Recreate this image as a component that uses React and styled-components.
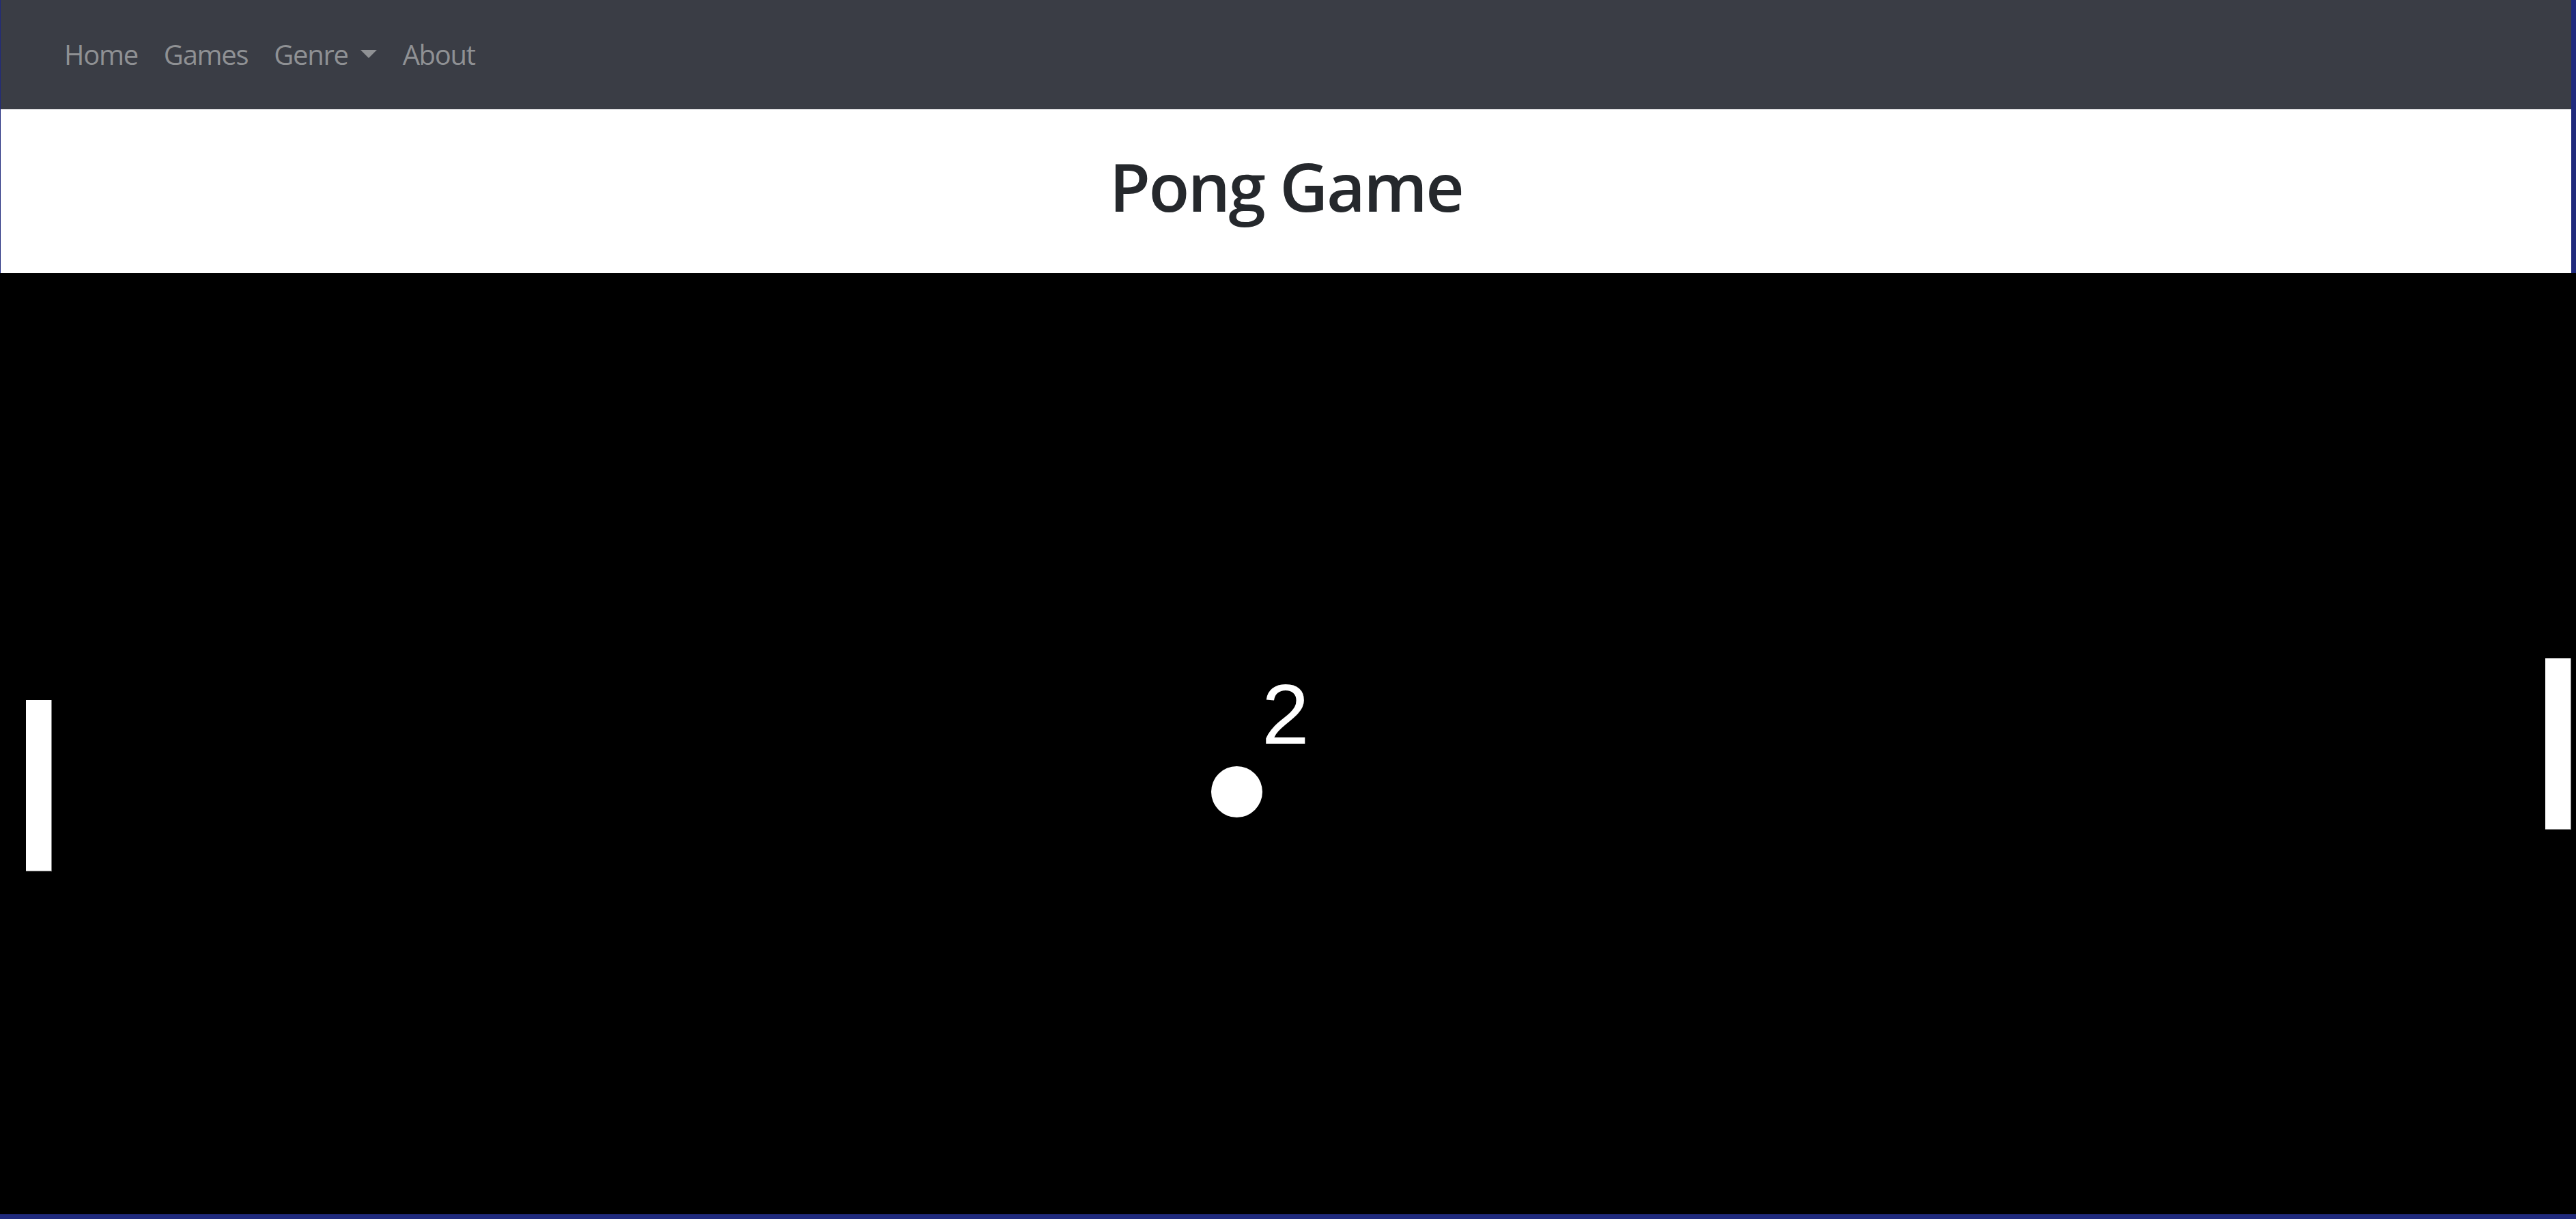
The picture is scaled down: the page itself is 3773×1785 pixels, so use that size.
import styled, { createGlobalStyle } from 'styled-components';

const GlobalStyle = createGlobalStyle`
  html,
  body {
    margin: 0;
    padding: 0;
    background: #202a7d;
  }
  * {
    box-sizing: border-box;
  }
`;

const links = ['Home', 'Games', 'Genre', 'About'];

export default function App() {
  return (
    <>
      <GlobalStyle />
      <Page>
        <Top>
          <Navbar>
            {links.map((l) => (
              <NavLink key={l} $dropdown={l === 'Genre'}>
                {l}
              </NavLink>
            ))}
          </Navbar>
          <Header>
            <Title>Pong Game</Title>
          </Header>
        </Top>
        <Field>
          <Paddle $x={38} $y={625} />
          <Paddle $x={3728} $y={564} />
          <Score>2</Score>
          <Ball />
        </Field>
      </Page>
    </>
  );
}

const Page = styled.div`
  padding-bottom: 7px;
  background: #202a7d;
`;

const Top = styled.div`
  margin: 0 7px 0 1px;
`;

const Navbar = styled.nav`
  height: 160px;
  display: flex;
  align-items: flex-start;
  padding: 50px 0 0 74px;
  background: #3a3d45;
`;

const NavLink = styled.a`
  padding: 0 19px;
  font-family: 'Open Sans', 'Noto Sans', sans-serif;
  font-size: 40px;
  letter-spacing: -1.3px;
  line-height: 1.5;
  color: #8f9194;
  cursor: pointer;

  ${(p) =>
    p.$dropdown &&
    `
    &::after {
      content: '';
      display: inline-block;
      margin-left: 18px;
      vertical-align: 10px;
      border-top: 12px solid #8f9194;
      border-left: 12px solid transparent;
      border-right: 12px solid transparent;
    }
  `}
`;

const Header = styled.header`
  height: 240px;
  padding-top: 54px;
  background: #fff;
  text-align: center;
`;

const Title = styled.h1`
  margin: 0;
  font-family: 'Open Sans', 'Noto Sans', sans-serif;
  font-size: 98px;
  font-weight: 600;
  letter-spacing: -2.5px;
  line-height: 1.2;
  color: #25282c;
`;

const Field = styled.div`
  position: relative;
  height: 1378px;
  background: #000;
  overflow: hidden;
`;

const Paddle = styled.div`
  position: absolute;
  left: ${(p) => p.$x}px;
  top: ${(p) => p.$y}px;
  width: 38px;
  height: 251px;
  background: #fff;
  box-shadow: inset -1px -1px 0 #7a7a7a;
`;

const Ball = styled.div`
  position: absolute;
  left: 1774px;
  top: 722px;
  width: 75px;
  height: 75px;
  border-radius: 50%;
  background: #fff;
`;

const Score = styled.div`
  position: absolute;
  left: 1848px;
  top: 583px;
  font-family: 'Liberation Sans', Arial, sans-serif;
  font-size: 125px;
  line-height: 1;
  color: #fff;
`;
